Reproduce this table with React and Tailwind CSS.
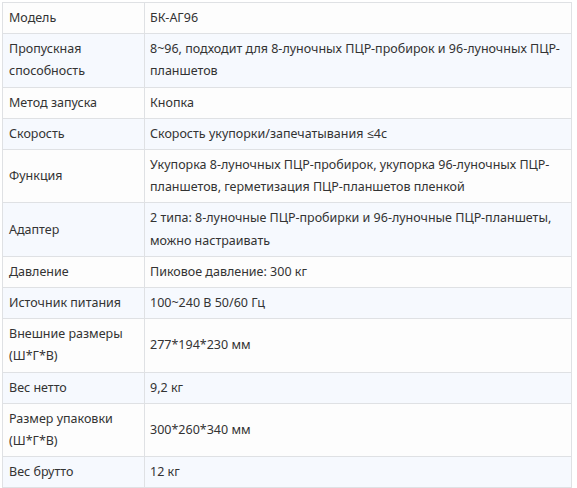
import React from 'react';

const rows = [
  ['Модель', 'БК-АГ96'],
  ['Пропускная способность', '8~96, подходит для 8-луночных ПЦР-пробирок и 96-луночных ПЦР-планшетов'],
  ['Метод запуска', 'Кнопка'],
  ['Скорость', 'Скорость укупорки/запечатывания ≤4с'],
  ['Функция', 'Укупорка 8-луночных ПЦР-пробирок, укупорка 96-луночных ПЦР-планшетов, герметизация ПЦР-планшетов пленкой'],
  ['Адаптер', '2 типа: 8-луночные ПЦР-пробирки и 96-луночные ПЦР-планшеты, можно настраивать'],
  ['Давление', 'Пиковое давление: 300 кг'],
  ['Источник питания', '100~240 В 50/60 Гц'],
  ['Внешние размеры (Ш*Г*В)', '277*194*230 мм'],
  ['Вес нетто', '9,2 кг'],
  ['Размер упаковки (Ш*Г*В)', '300*260*340 мм'],
  ['Вес брутто', '12 кг'],
];

export default function App() {
  return (
    <div className="bg-white min-h-[488px] pt-[2px] pl-[2px]" style={{ fontFamily: '"Noto Sans", "Open Sans", sans-serif' }}>
      <table className="w-[570px] border-collapse table-fixed text-[12.5px] leading-[22.2px] text-[#333333]">
        <colgroup>
          <col className="w-[142px]" />
          <col />
        </colgroup>
        <tbody>
          {rows.map(([k, v], i) => (
            <tr key={k} className={i % 2 === 0 ? 'bg-[#fdfdfd]' : 'bg-[#f6f9fe]'}>
              <td className="border border-[#dfe1e4] px-[6px] py-[4px] align-middle">{k}</td>
              <td className="border border-[#dfe1e4] px-[5px] py-[4px] align-middle">{v}</td>
            </tr>
          ))}
        </tbody>
      </table>
    </div>
  );
}
